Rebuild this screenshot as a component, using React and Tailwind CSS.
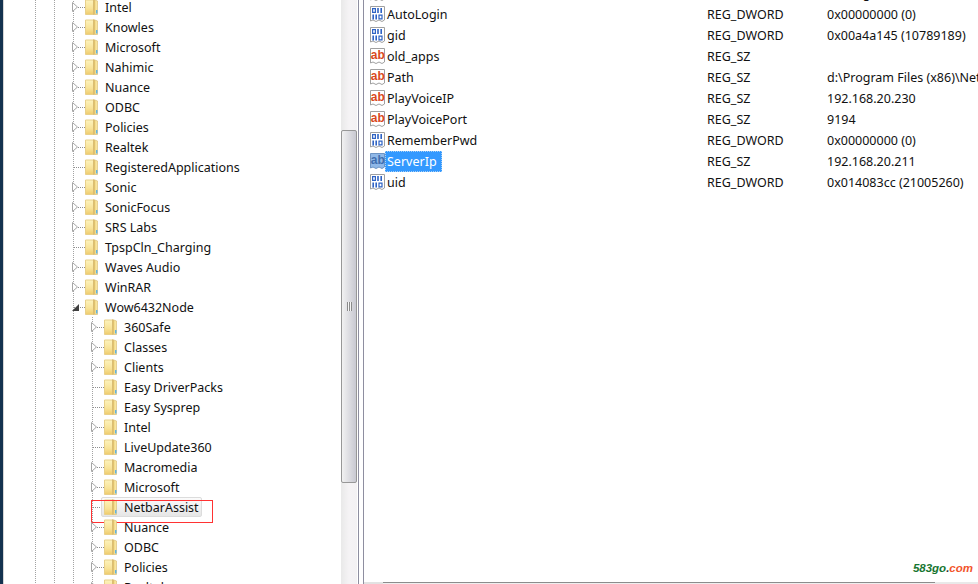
const level1 = [
  ['Intel', 1], ['Knowles', 1], ['Microsoft', 1], ['Nahimic', 1], ['Nuance', 1], ['ODBC', 1], ['Policies', 1], ['Realtek', 1],
  ['RegisteredApplications', 0], ['Sonic', 1], ['SonicFocus', 1], ['SRS Labs', 1], ['TpspCln_Charging', 0], ['Waves Audio', 1], ['WinRAR', 1],
];

const level2 = [
  ['360Safe', 1], ['Classes', 1], ['Clients', 1], ['Easy DriverPacks', 0], ['Easy Sysprep', 0], ['Intel', 1], ['LiveUpdate360', 0],
  ['Macromedia', 1], ['Microsoft', 1], ['NetbarAssist', 0, true], ['Nuance', 1], ['ODBC', 1], ['Policies', 1], ['Realtek', 1],
];

const values = [
  ['ab', 'Home', 'REG_SZ', 'd:\\Program Files (x86)\\NetbarAssist\\Netbar\\Netbar\\App'],
  ['bin', 'AutoLogin', 'REG_DWORD', '0x00000000 (0)'],
  ['bin', 'gid', 'REG_DWORD', '0x00a4a145 (10789189)'],
  ['ab', 'old_apps', 'REG_SZ', ''],
  ['ab', 'Path', 'REG_SZ', 'd:\\Program Files (x86)\\NetbarAssist\\Netbar'],
  ['ab', 'PlayVoiceIP', 'REG_SZ', '192.168.20.230'],
  ['ab', 'PlayVoicePort', 'REG_SZ', '9194'],
  ['bin', 'RememberPwd', 'REG_DWORD', '0x00000000 (0)'],
  ['ab', 'ServerIp', 'REG_SZ', '192.168.20.211', true],
  ['bin', 'uid', 'REG_DWORD', '0x014083cc (21005260)'],
];

function Connector({ mode }) {
  return (
    <svg width="13" height="20" viewBox="0 0 13 20" className="shrink-0">
      <path d="M1.5 0V20" stroke="#a3a3a3" strokeDasharray="1 1" />
      <path d="M2 10.5H13" stroke="#8f8f8f" strokeDasharray="1 1" />
      {mode === 'closed' && <path d="M0.5 5.5L5.5 10L0.5 14.5Z" fill="#fff" stroke="#a6a6a6" />}
      {mode === 'open' && <path d="M0 14H7V7Z" fill="#404040" />}
    </svg>
  );
}

function Folder() {
  return (
    <svg width="13" height="16" viewBox="0 0 13 16" className="shrink-0">
      <defs>
        <linearGradient id="fd" x1="0" y1="0" x2="0" y2="1">
          <stop offset="0" stopColor="#fdf3bd" />
          <stop offset="0.6" stopColor="#f8e296" />
          <stop offset="1" stopColor="#eecb6c" />
        </linearGradient>
        <linearGradient id="fp" x1="0" y1="0" x2="1" y2="0">
          <stop offset="0" stopColor="#c29c44" />
          <stop offset="0.4" stopColor="#f3d987" />
          <stop offset="1" stopColor="#fbeeb0" />
        </linearGradient>
      </defs>
      <path d="M0.5 1H8.5V15.5H0.5Z" fill="url(#fd)" stroke="#e8d08a" />
      <path d="M8.5 0.5L12.5 2V15.5H8.5Z" fill="url(#fp)" stroke="#dcc078" strokeWidth="0.7" />
      <rect x="11" y="11" width="1.5" height="3.5" fill="#5fb4e6" />
    </svg>
  );
}

function TreeRow({ name, expander, marked }) {
  return (
    <div className="flex h-5 items-center ml-[17px] relative">
      <Connector mode={expander} />
      {marked ? (
        <div className="flex items-center h-5 -ml-[3px] pl-[2px] pr-[2px] border border-[#dcdcdc] rounded-[2px] bg-gradient-to-b from-[#fbfbfb] to-[#e6e6e6]">
          <Folder />
          <span className="ml-[7px] pt-[2px] leading-[18px] whitespace-nowrap">{name}</span>
        </div>
      ) : (
        <>
          <Folder />
          <span className="ml-[7px] pt-[2px] leading-5 whitespace-nowrap">{name}</span>
        </>
      )}
      {marked && <div className="absolute left-0 top-[3px] w-[122px] h-[23px] border border-[#ff3333]" />}
    </div>
  );
}

function RegIcon({ kind, selected }) {
  return (
    <svg width="16" height="17" viewBox="0 0 16 17" className="shrink-0">
      <path d="M0.5 0.5H14.5V14L12 15.5L9 14L6 15.5L3 14L0.5 15Z" fill={selected ? '#8fb8e8' : '#fff'} stroke={selected ? '#6d94c4' : '#a0a0a0'} />
      {kind === 'ab' ? (
        <text x="0.8" y="11" fontSize="12" fontWeight="700" fontFamily="Liberation Sans, sans-serif" fill={selected ? '#3f6fb0' : '#d9481c'}>ab</text>
      ) : (
        <g fill="#2f63c4">
          <path fillRule="evenodd" d="M2 2H6V7H2ZM3.2 3.2V5.8H4.8V3.2Z" />
          <rect x="7.2" y="2" width="1.6" height="5" />
          <rect x="10.4" y="2" width="1.6" height="5" />
          <rect x="2.4" y="8.5" width="1.6" height="5" />
          <rect x="5.4" y="8.5" width="1.6" height="5" />
          <path fillRule="evenodd" d="M8.4 8.5H12.6V13.5H8.4ZM9.6 9.7V12.3H11.4V9.7Z" />
        </g>
      )}
    </svg>
  );
}

function ValueRow({ kind, name, type, value, selected }) {
  return (
    <div className="flex h-[21px] items-center">
      <div className="w-[343px] shrink-0 flex items-center pl-[6px]">
        <RegIcon kind={kind} selected={selected} />
        <span className={selected
          ? 'h-[21px] leading-[19px] -ml-[1px] px-[1px] w-[57px] bg-[#3399ff] text-white border border-dotted border-[#a9d0f5]'
          : 'ml-[1px] leading-[21px]'}>
          {name}
        </span>
      </div>
      <div className="w-[120px] shrink-0 leading-[21px]">{type}</div>
      <div className="whitespace-nowrap leading-[21px]">{value}</div>
    </div>
  );
}

export default function App() {
  return (
    <div className="relative w-[978px] h-[584px] overflow-hidden bg-white flex text-[12.5px] text-[#111] font-['Noto_Sans','Liberation_Sans',sans-serif]">
      <div className="w-[4px] shrink-0 bg-[#14324f] border-r border-[#d5d5d5]" />

      {/* tree */}
      <div className="w-[337px] shrink-0 overflow-hidden">
        <div className="-mt-[3px] ml-[31px] border-l border-dotted border-[#a3a3a3] h-[700px]">
          <div className="ml-[18px] border-l border-dotted border-[#a3a3a3] h-full">
            {level1.map(([name, hasKids]) => (
              <TreeRow key={name} name={name} expander={hasKids ? 'closed' : null} />
            ))}
            <TreeRow name="Wow6432Node" expander="open" />
            <div className="ml-[18px] border-l border-dotted border-[#a3a3a3]">
              {level2.map(([name, hasKids, marked]) => (
                <TreeRow key={name} name={name} expander={hasKids ? 'closed' : null} marked={marked} />
              ))}
            </div>
          </div>
        </div>
      </div>

      {/* tree scrollbar */}
      <div className="w-[16px] shrink-0 bg-gradient-to-r from-[#e9e9e9] via-[#f5f3f5] to-[#f3f1f3] pt-[130px]">
        <div className="h-[353px] rounded-[2px] border border-[#979797] bg-gradient-to-r from-[#f1f1f1] to-[#c9c9d2] flex items-center justify-center">
          <div className="w-[5px] h-[9px] bg-[repeating-linear-gradient(90deg,#8a8a8a_0,#8a8a8a_1px,#f5f5f5_1px,#f5f5f5_2px)]" />
        </div>
      </div>

      {/* splitter */}
      <div className="w-[6px] shrink-0 border-x border-[#8e8ea0] ml-[1px]" />

      {/* values */}
      <div className="flex-1 min-w-0 flex flex-col overflow-hidden">
        <div className="flex-1 -mt-[17px]">
          {values.map((row) => (
            <ValueRow key={row[1]} kind={row[0]} name={row[1]} type={row[2]} value={row[3]} selected={row[4]} />
          ))}
        </div>
        <div className="h-[2px] flex shrink-0">
          <div className="w-[19px] bg-[#e2e2e2]" />
          <div className="w-[552px] border-t border-[#8c8c8c] bg-[#eeeeee]" />
          <div className="flex-1 bg-[#e9e9e9]" />
        </div>
      </div>

      <div className="absolute right-[5px] top-[560px] text-[11.5px] font-bold italic font-['Liberation_Sans',sans-serif]">
        <span className="text-[#16752f]">583go</span><span className="text-[#333]">.</span><span className="text-[#f2552c]">com</span>
      </div>
    </div>
  );
}
